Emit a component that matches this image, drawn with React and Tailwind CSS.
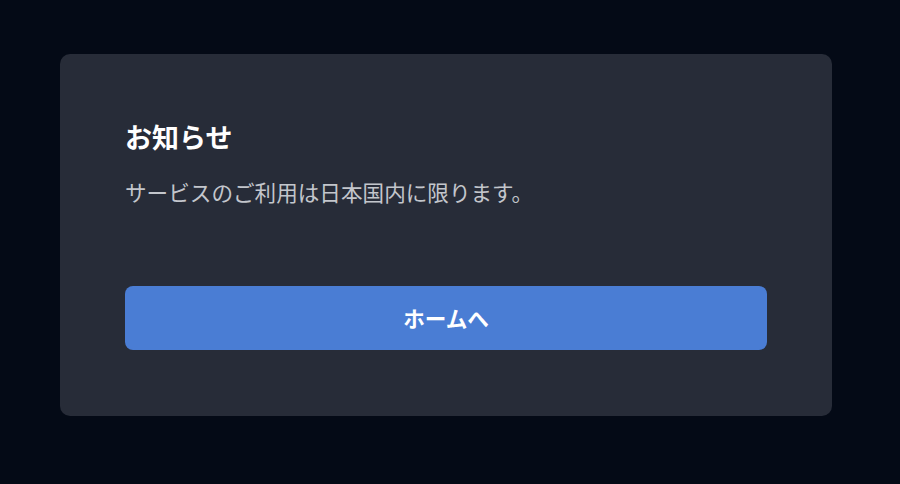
import React from 'react'

const App = () => {
    return (
        <div className="min-h-screen w-full bg-[#040a16] pt-[54px] pl-[60px]"
             style={{fontFamily: '"Noto Sans CJK JP", "Noto Sans", sans-serif'}}>
            <div className="w-[772px] h-[362px] rounded-[10px] bg-[#272c38] px-[65px] pt-[65px]">
                <h1 className="text-[27px] leading-[36px] font-bold text-white">お知らせ</h1>
                <p className="mt-[22px] text-[21.6px] leading-[30px] text-[#c3c6cc]">
                    サービスのご利用は日本国内に限ります。
                </p>
                <button
                    className="mt-[79px] w-full h-[64px] rounded-[8px] bg-[#4a7dd4] text-white text-[21.6px] font-bold">
                    ホームへ
                </button>
            </div>
        </div>
    )
}

export default App
